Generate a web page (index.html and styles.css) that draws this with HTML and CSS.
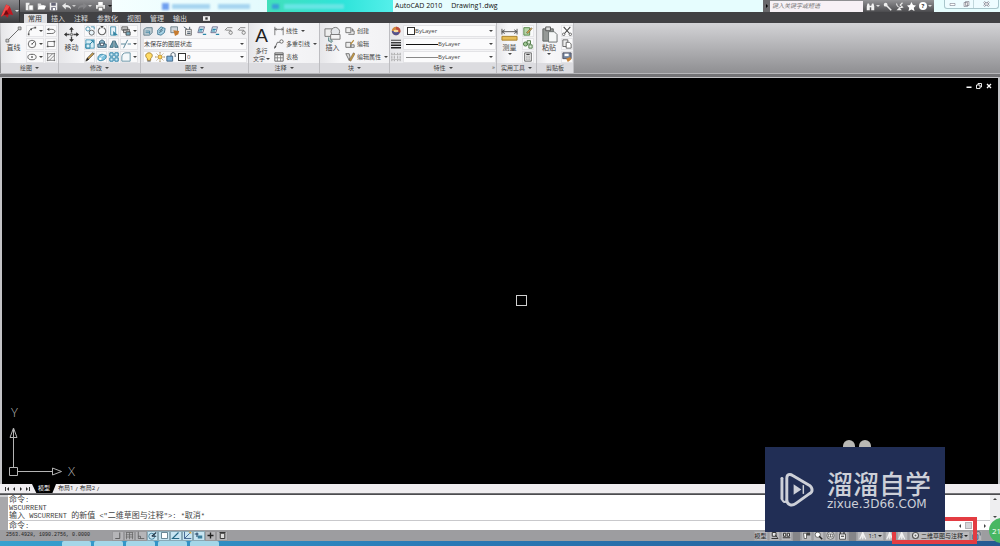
FILE: index.html
```html
<!DOCTYPE html>
<html lang="zh-CN">
<head>
<meta charset="utf-8">
<title>AutoCAD 2010 - Drawing1.dwg</title>
<link rel="stylesheet" href="styles.css">
</head>
<body>
<svg class="defs" aria-hidden="true">
  <symbol id="new" viewBox="0 0 12 12"><path d="M1 1h5v10H1z" fill="#eee"/><path d="M5 4h6v7H5z" fill="#fff" stroke="#777"/></symbol>
  <symbol id="open" viewBox="0 0 12 12"><path d="M1 10V2h4l1 2h4v2" fill="#ddd"/><path d="M1 10l2-5h9l-2 5z" fill="#fff"/></symbol>
  <symbol id="save" viewBox="0 0 12 12"><path d="M1 1h10v10H1z" fill="#eee"/><path d="M3 1h6v4H3zM3 7h6v4H3z" fill="#667"/><path d="M5 8h3v3H5z" fill="#fff"/></symbol>
  <symbol id="undo" viewBox="0 0 12 12"><path d="M0 5l5-4v3c5 0 7 2 7 6-2-3-4-3-7-3v3z" fill="#e8e8e8"/></symbol>
  <symbol id="redo" viewBox="0 0 12 12"><path d="M12 5L7 1v3C2 4 0 6 0 10c2-3 4-3 7-3v3z" fill="#858588"/></symbol>
  <symbol id="print" viewBox="0 0 12 12"><path d="M3 0h6v4H3z" fill="#fff"/><path d="M0 4h12v5H0z" fill="#e6e6e6"/><path d="M3 7h6v5H3z" fill="#fff" stroke="#555"/></symbol>
  <symbol id="line" viewBox="0 0 18 18"><path d="M2 16L16 2" stroke="#666" fill="none"/><path d="M1 14h3v3H1zM14 1h3v3h-3z" fill="#ccc" stroke="#666" stroke-width=".8"/></symbol>
  <symbol id="arc" viewBox="0 0 12 12"><path d="M2 10C2 5 4 3 10 2" stroke="#555" fill="none"/><path d="M1 9h2v2H1zM4 3h2v2H4zM9 1h2v2H9z" fill="#555"/></symbol>
  <symbol id="circle" viewBox="0 0 12 12"><circle cx="6" cy="6" r="4.5" stroke="#555" fill="none"/><path d="M6 6l3-3M5 6h2" stroke="#444"/></symbol>
  <symbol id="ellipse" viewBox="0 0 12 12"><ellipse cx="6" cy="6" rx="5" ry="3.3" stroke="#555" fill="none"/><path d="M5 6h2M6 5v2M6 2.500v1" stroke="#444"/></symbol>
  <symbol id="pline" viewBox="0 0 12 12"><path d="M1 9h6c5 0 5-5 0-5H4" stroke="#555" fill="none"/><path d="M4 2v4L1 4z" fill="#444"/></symbol>
  <symbol id="rect" viewBox="0 0 12 12"><path d="M2 3h8v6H2z" stroke="#666" fill="none"/><path d="M1 8h2v2H1zM9 2h2v2H9z" fill="#555"/></symbol>
  <symbol id="hatch" viewBox="0 0 12 12"><path d="M1 2h10M1 10h10M2 1v10M10 1v10M2 8l6-6M4 10l6-6" stroke="#666" fill="none" stroke-width=".9"/></symbol>
  <symbol id="move" viewBox="0 0 18 18"><path d="M9 3v4M9 11v4M3 9h4M11 9h4" stroke="#444" stroke-width="1.400"/><path d="M9 1l2.500 3h-5zM9 17l2.500-3h-5zM1 9l3-2.500v5zM17 9l-3-2.500v5z" fill="#333"/><path d="M8 8h2v2H8z" stroke="#777" fill="#ddd"/></symbol>
  <symbol id="copy2" viewBox="0 0 12 12"><circle cx="3.500" cy="3.500" r="2.500" stroke="#3686a5" fill="none"/><circle cx="8" cy="8" r="3" stroke="#555" fill="#e8f4fa"/><path d="M7 1h4v3" stroke="#3686a5" fill="none"/></symbol>
  <symbol id="rotate" viewBox="0 0 12 12"><path d="M4 2a4.500 4.500 0 1 0 4 0" stroke="#666" stroke-width="1.300" fill="none"/><path d="M4 0h4L6 3z" fill="#444"/></symbol>
  <symbol id="stretch" viewBox="0 0 12 12"><path d="M2 1h6v10H2z" stroke="#3686a5" fill="#e8f4fa"/><path d="M5 6l6 5H5z" fill="#3686a5"/></symbol>
  <symbol id="scale" viewBox="0 0 12 12"><path d="M1 1h10v10H1z" stroke="#3a93b5" fill="#d8eef6"/><path d="M1 6h5v5H1zM6 6l4-4M7 2h3v3" stroke="#2e86a8" fill="none" stroke-width="1.200"/></symbol>
  <symbol id="offset" viewBox="0 0 12 12"><path d="M1 10V6h2V3l3-2 3 2v3h2v4z" stroke="#2b5872" fill="#8eb9cc"/><path d="M4 8V5h4v3z" fill="#fff" stroke="#345"/></symbol>
  <symbol id="mirror" viewBox="0 0 12 12"><path d="M5 2v8H1zM7 2v8h4z" fill="#79aabd" stroke="#2d5b70"/></symbol>
  <symbol id="pencil" viewBox="0 0 12 12"><path d="M1 11l1-3 7-7 2 1-7 7z" fill="#d9ab52" stroke="#333" stroke-width=".8"/><path d="M1 11l2-4 2 2z" fill="#222"/></symbol>
  <symbol id="explode" viewBox="0 0 12 12"><path d="M1 8c0-4 3-6 7-5 4 0 4 4 1 6-3 2-8 2-8-1z" fill="#7fc2df" stroke="#25799c"/><circle cx="4" cy="8" r="1.500" fill="#fff"/><path d="M5 6l4-3" stroke="#fff"/></symbol>
  <symbol id="array" viewBox="0 0 12 12"><path d="M1 1h4v4H1zM7 1h4v4H7zM1 7h4v4H1zM7 7h4v4H7z" stroke="#267fa6" fill="#cdeaf6" stroke-width="1.200"/></symbol>
  <symbol id="order" viewBox="0 0 12 12"><path d="M1 1h7v4H1zM3 4h7v4H3z" fill="#ccc" stroke="#555"/><path d="M6 7h5v4H6z" fill="#7dafc2" stroke="#444"/></symbol>
  <symbol id="trim" viewBox="0 0 12 12"><path d="M0 6h5M8 6h4M3 11l5-10" stroke="#3d7187" fill="none"/></symbol>
  <symbol id="fillet" viewBox="0 0 12 12"><path d="M1 11V6c0-3 2-5 5-5h5v10z" stroke="#57879a" fill="#f4f8fa"/></symbol>
  <symbol id="layer" viewBox="0 0 12 12"><path d="M1 4l3-2h7v6l-3 3H1z" fill="#c2cfd5" stroke="#587583"/><path d="M3 6h5v4M3 8h5" stroke="#4285a3" fill="none"/></symbol>
  <symbol id="layer2" viewBox="0 0 12 12"><path d="M2 5l4-4 5 2-1 5-4 3-4-1z" fill="#a8d2e5" stroke="#3c7490"/><path d="M4 6l4-3M4 8l4-3" stroke="#33556a"/></symbol>
  <symbol id="layer3" viewBox="0 0 12 12"><path d="M1 1h8v7H1z" fill="#d0d7dc" stroke="#637780"/><path d="M4 5l7 1-1 4-4 2z" fill="#c67b2f"/></symbol>
  <symbol id="layer4" viewBox="0 0 12 12"><path d="M3 4h7v7H3z" fill="#eee" stroke="#666"/><path d="M1 1l4 3M8 1v3M5 7h4M5 9h4" stroke="#345"/></symbol>
  <symbol id="layer5" viewBox="0 0 12 12"><path d="M3 1h6l-2 7H1z" fill="#d8eaf2" stroke="#668"/><path d="M3 4h4M2 6h4M7 10h4" stroke="#2a88aa" stroke-width="1.400"/></symbol>
  <symbol id="layer6" viewBox="0 0 12 12"><path d="M1 5l3-3h6M2 5h6v5" stroke="#777" fill="none"/><circle cx="8" cy="8" r="2" stroke="#777" fill="#eee"/></symbol>
  <symbol id="bulb" viewBox="0 0 12 12"><path d="M4 8C0 4 3 1 6 1s6 3 2 7v2H4z" fill="#ffdc65" stroke="#9a7424"/><path d="M4 11h4" stroke="#555"/></symbol>
  <symbol id="sun" viewBox="0 0 12 12"><circle cx="6" cy="6" r="2.500" fill="#ffd65b" stroke="#ae7e22"/><path d="M6 0v2M6 10v2M0 6h2M10 6h2M2 2l1 1M9 9l1 1M2 10l1-1M9 3l1-1" stroke="#94702b"/></symbol>
  <symbol id="lock" viewBox="0 0 12 12"><path d="M1 5h7v6H1z" fill="#7eb2da" stroke="#315a7c"/><path d="M6 5V3c0-3 5-3 5 0v3" stroke="#345" fill="none"/></symbol>
  <symbol id="dim" viewBox="0 0 12 12"><path d="M1 1v10M11 1v10M1 4h10M3 3L1 4l2 1M9 3l2 1-2 1" stroke="#666" fill="none"/></symbol>
  <symbol id="leader" viewBox="0 0 12 12"><path d="M1 11l3-7h3" stroke="#555" fill="none"/><circle cx="9" cy="3" r="2" stroke="#555" fill="#fff"/><path d="M0 12l1-4 2 1z" fill="#444"/></symbol>
  <symbol id="table" viewBox="0 0 12 12"><path d="M1 1h10v10H1z" fill="#fff" stroke="#555"/><path d="M1 2h10v2H1z" fill="#666"/><path d="M1 7h10M4 4v7M8 4v7" stroke="#777"/></symbol>
  <symbol id="insert" viewBox="0 0 18 18"><path d="M1 3h9v8H1z" stroke="#777" fill="#eee"/><circle cx="12" cy="6" r="4.500" stroke="#777" fill="#e4e7ea"/><path d="M7 9h10v5H7z" stroke="#777" fill="#f4f4f4"/><path d="M5 12v4h3M7 14l2 2-2 2" stroke="#477" fill="none"/></symbol>
  <symbol id="create" viewBox="0 0 12 12"><path d="M1 2h6v6H1zM4 10h7V6H8" stroke="#666" fill="#eee"/><path d="M8 2l3 3-3 1z" fill="#777"/></symbol>
  <symbol id="edit" viewBox="0 0 12 12"><path d="M1 4h6v6H1zM7 7h4v3H7z" stroke="#666" fill="#eee"/><path d="M6 6l4-5 1 1-4 5z" fill="#b78b37"/></symbol>
  <symbol id="attr" viewBox="0 0 12 12"><path d="M1 2h4l1 4-1 4-4-8z" stroke="#666" fill="#ddd"/><path d="M5 10l5-9 2 1-5 9z" fill="#c49b43" stroke="#544" stroke-width=".5"/></symbol>
  <symbol id="wheel" viewBox="0 0 12 12"><circle cx="6" cy="6" r="5" fill="#d1873c"/><path d="M1 6a5 5 0 0 0 10 0z" fill="#54538f"/><path d="M6 1v5l5 2a5 5 0 0 0-5-7" fill="#bd4d3e"/><ellipse cx="6" cy="6" rx="3" ry="1.500" fill="#f6d99a"/></symbol>
  <symbol id="weights" viewBox="0 0 12 12"><path d="M0 1.500h12" stroke="#222"/><path d="M0 4.500h12" stroke="#222" stroke-width="1.500"/><path d="M0 7.500h12M0 10.500h12" stroke="#222" stroke-width="2"/></symbol>
  <symbol id="types" viewBox="0 0 12 12"><path d="M1 1v10M4 1v10M8 1v10M11 1v10" stroke="#999" stroke-dasharray="3 1"/><path d="M0 3h12M0 9h12" stroke="#bbb"/></symbol>
  <symbol id="measure" viewBox="0 0 18 18"><path d="M1 3v6M17 3v6M1 6h16M4 4L1 6l3 2M14 4l3 2-3 2" stroke="#555" fill="none"/><path d="M1 11h16v4H1z" fill="#e6bd58" stroke="#a98129"/></symbol>
  <symbol id="qselect" viewBox="0 0 12 12"><path d="M1 2h7v9H1z" fill="#b6d6a7" stroke="#477b3a"/><path d="M4 8l6-6 1 1-5 6z" fill="#d9a446" stroke="#554" stroke-width=".6"/></symbol>
  <symbol id="group" viewBox="0 0 12 12"><circle cx="3" cy="6" r="2.500" fill="#a0c995" stroke="#3d6b35"/><path d="M5 2h4v4H5zM7 7h4v4H7z" fill="#dbecd5" stroke="#3d6b35"/></symbol>
  <symbol id="calc" viewBox="0 0 12 12"><path d="M2 1h8v10H2z" fill="#eee" stroke="#555"/><path d="M4 3h4" stroke="#444" stroke-width="1.500"/><path d="M4 6h4M4 8.500h4" stroke="#555" stroke-dasharray="1 .6"/></symbol>
  <symbol id="paste" viewBox="0 0 18 18"><path d="M2 3h11v13H2z" fill="#959997" stroke="#5c605f"/><path d="M5 1h5v4H5z" fill="#ddd" stroke="#555"/><path d="M8 6h6l3 3v8H8z" fill="#f5f7f7" stroke="#69706e"/></symbol>
  <symbol id="cut" viewBox="0 0 12 12"><path d="M2 1l7 8M10 1L3 9" stroke="#444" stroke-width="1.300"/><circle cx="2" cy="10" r="1.500" stroke="#555" fill="none"/><circle cx="10" cy="10" r="1.500" stroke="#555" fill="none"/></symbol>
  <symbol id="copy" viewBox="0 0 12 12"><path d="M1 1h6v8H1z" stroke="#555" fill="#eee"/><path d="M5 4h4l2 2v5H5z" stroke="#555" fill="#fff"/></symbol>
  <symbol id="match" viewBox="0 0 12 12"><path d="M1 1h10v7H1z" fill="#72849e" stroke="#445"/><path d="M3 2h5v3H3z" fill="#fff"/><path d="M5 8l5-2 1 3-4 3z" fill="#c98538"/></symbol>
  <symbol id="bino" viewBox="0 0 12 12"><path d="M1 11V6l1-4h2l1 3h2l1-3h2l1 4v5H7V7H5v4z" fill="#f2f2f2"/></symbol>
  <symbol id="key" viewBox="0 0 12 12"><path d="M4 4l7 7" stroke="#eee" stroke-width="2"/><circle cx="3.500" cy="3.500" r="2.500" fill="#eee"/></symbol>
  <symbol id="dish" viewBox="0 0 12 12"><path d="M2 2c1 5 3 6 8 5L7 4l3-3" stroke="#eee" stroke-width="1.500" fill="none"/><path d="M2 11l4-4 3 4z" fill="#eee"/></symbol>
  <symbol id="star" viewBox="0 0 12 12"><path d="M6 0l2 4 4 .5-3 3 1 4.500-4-2-4 2 1-4.500-3-3L4 4z" fill="#fff"/></symbol>
  <symbol id="min" viewBox="0 0 12 12"><path d="M1 7h10v3H1z" fill="currentColor"/></symbol>
  <symbol id="restore" viewBox="0 0 12 12"><path d="M4 4V1h7v7H8M1 4h7v7H1z" fill="none" stroke="currentColor" stroke-width="1.800"/></symbol>
  <symbol id="close" viewBox="0 0 12 12"><path d="M2 2l8 8M10 2l-8 8" stroke="currentColor" stroke-width="2.600"/></symbol>
  <symbol id="snap" viewBox="0 0 12 12"><path d="M9 2v8H3" stroke="#444" fill="none"/></symbol>
  <symbol id="grid" viewBox="0 0 12 12"><path d="M1 2h10M1 5h10M1 8h10M2 2v9M6 2v9M10 2v9" stroke="#666" fill="none"/></symbol>
  <symbol id="ortho" viewBox="0 0 12 12"><path d="M3 1v9h8M3 7h3v3" stroke="#555" fill="none"/></symbol>
  <symbol id="polar" viewBox="0 0 12 12"><circle cx="5" cy="7" r="4" stroke="#246785" fill="none"/><path d="M5 7l6-5M5 7h6" stroke="#234" stroke-width="1.400"/></symbol>
  <symbol id="osnap" viewBox="0 0 12 12"><path d="M2 2h8v8H2z" stroke="#467" fill="#fff"/></symbol>
  <symbol id="otrack" viewBox="0 0 12 12"><path d="M10 2L2 10h9" stroke="#246785" fill="none" stroke-width="1.500"/></symbol>
  <symbol id="ducs" viewBox="0 0 12 12"><path d="M2 1v9h9M2 10l7-7" stroke="#247" fill="none"/><path d="M7 1h4v3z" fill="#d5a13b"/></symbol>
  <symbol id="dyn" viewBox="0 0 12 12"><path d="M1 4h5M4 2v6" stroke="#246" stroke-width="1.500"/><path d="M5 6h6v4H5z" fill="#3b7d9b"/></symbol>
  <symbol id="plus" viewBox="0 0 12 12"><path d="M6 2v8M2 6h8" stroke="#222" stroke-width="1.800"/></symbol>
  <symbol id="qp" viewBox="0 0 12 12"><path d="M3 3h6v7H3zM2 2h8" stroke="#333" fill="#ddd" stroke-width="1.300"/></symbol>
  <symbol id="layout1" viewBox="0 0 12 12"><path d="M2 10h9M3 2h5v5H3zM7 5l3 4" stroke="#333" fill="#eee" stroke-width="1.300"/></symbol>
  <symbol id="layout2" viewBox="0 0 12 12"><path d="M1 9h10M2 3h3v4H2zM7 3h3v4H7z" stroke="#333" fill="#eee" stroke-width="1.300"/></symbol>
  <symbol id="pan" viewBox="0 0 12 12"><path d="M2 3h4v7H3z" fill="#fff" stroke="#444"/><path d="M6 2h5v4H6z" fill="#444"/></symbol>
  <symbol id="zoom" viewBox="0 0 12 12"><circle cx="5" cy="5" r="3.500" fill="#fff" stroke="#444"/><path d="M7 7l4 4" stroke="#222" stroke-width="2"/></symbol>
  <symbol id="orbit" viewBox="0 0 12 12"><circle cx="6" cy="6" r="5" fill="#eee" stroke="#555"/><path d="M3 4h6v4H3zM6 4v4" stroke="#555" fill="none"/></symbol>
  <symbol id="motion" viewBox="0 0 12 12"><path d="M2 4h8v7H2z" fill="#eee" stroke="#333"/><path d="M3 1v3M8 1v3M4 7h4" stroke="#333" stroke-width="1.500"/></symbol>
  <symbol id="person" viewBox="0 0 12 12"><path d="M1 11l4-9 4 9M3 8h4M5 2v9" stroke="#f2f2f2" fill="none" stroke-width="1.500"/></symbol>
  <symbol id="scaleA" viewBox="0 0 12 12"><path d="M1 11l4-9 4 9M3 8h4M5 2v9" stroke="#f2f2f2" fill="none" stroke-width="1.500"/><path d="M8 1l4 6H8z" fill="#dcae36"/></symbol>
  <symbol id="gear" viewBox="0 0 12 12"><circle cx="6" cy="6" r="4" fill="#eee" stroke="#555" stroke-width="1.500"/><circle cx="6" cy="6" r="1.300" fill="#666"/></symbol>
</svg>

<div class="app">
  <header class="title">
    <div class="quick">
      <button aria-label="新建"><svg><use href="#new"/></svg></button>
      <button aria-label="打开"><svg><use href="#open"/></svg></button>
      <button aria-label="保存"><svg><use href="#save"/></svg></button>
      <button aria-label="放弃"><svg><use href="#undo"/></svg><i class="arr"></i></button>
      <button aria-label="重做"><svg><use href="#redo"/></svg><i class="arr"></i></button>
      <button aria-label="打印"><svg><use href="#print"/></svg></button>
      <button aria-label="自定义"><i class="arr dark"></i></button>
    </div>
    <div class="glass" aria-hidden="true"><i class="ghost g1"></i><i class="ghost g2"></i><i class="ghost g2"></i><i class="teal"><i class="ghost g3"></i><i class="ghost g4"></i></i></div>
    <h1 class="caption"><span>AutoCAD 2010</span><span>Drawing1.dwg</span></h1>
    <div class="info">
      <button class="fold" aria-label="折叠"><i class="arr right"></i></button>
      <input type="text" placeholder="键入关键字或短语" aria-label="搜索">
      <button aria-label="查找"><svg><use href="#bino"/></svg><i class="arr"></i></button>
      <button aria-label="速博中心"><svg><use href="#key"/></svg></button>
      <button aria-label="通讯中心"><svg><use href="#dish"/></svg></button>
      <button aria-label="收藏夹"><svg><use href="#star"/></svg></button>
      <button aria-label="帮助"><span class="help">?</span><i class="arr"></i></button>
    </div>
    <div class="win">
      <button aria-label="最小化"><svg viewBox="0 0 12 12"><path d="M1 5h10v4H1z" fill="#fff" stroke="#667"/></svg></button>
      <button aria-label="还原"><svg viewBox="0 0 12 12"><path d="M4 1h7v8H4zM1 3h7v8H1z" fill="#eee" stroke="#667"/></svg></button>
      <button class="x" aria-label="关闭"><svg viewBox="0 0 12 12"><path d="M1 2l10 8M11 2L1 10" stroke="#667" stroke-width="4"/><path d="M1 2l10 8M11 2L1 10" stroke="#fff" stroke-width="2"/></svg></button>
    </div>
    <button class="logo" aria-label="应用程序菜单"><svg viewBox="0 0 16 18"><path d="M1 15L7 1l4 2 4 10-5-1-1 4-4-3z" fill="#c3161f"/><path d="M7 1l4 2-5 8-5 4z" fill="#ee4a48"/><path d="M7 7l3 5-6 1z" fill="#6f0b12"/></svg><i class="arr"></i></button>
  </header>

  <nav class="tabs">
    <button class="on">常用</button><button>插入</button><button>注释</button><button>参数化</button><button>视图</button><button>管理</button><button>输出</button><button class="mini" aria-label="最小化功能区"><svg viewBox="0 0 12 8"><path d="M0 0h12v8H0z" fill="#eee"/><path d="M4 2h4v4H4z" fill="#333"/></svg></button>
  </nav>

  <main class="ribbon">
    <section class="panel p-draw">
      <div class="body">
        <button class="big"><svg><use href="#line"/></svg><span>直线</span></button>
        <div class="icons c2">
          <button class="drop" aria-label="圆弧"><svg><use href="#arc"/></svg><i class="arr"></i></button><button aria-label="多段线"><svg><use href="#pline"/></svg></button>
          <button class="drop" aria-label="圆"><svg><use href="#circle"/></svg><i class="arr"></i></button><button aria-label="矩形"><svg><use href="#rect"/></svg></button>
          <button class="drop" aria-label="椭圆"><svg><use href="#ellipse"/></svg><i class="arr"></i></button><button aria-label="图案填充"><svg><use href="#hatch"/></svg></button>
        </div>
      </div>
      <h2>绘图<i class="arr"></i></h2>
    </section>

    <section class="panel p-modify">
      <div class="body">
        <button class="big"><svg><use href="#move"/></svg><span>移动</span></button>
        <div class="icons c4">
          <button aria-label="复制"><svg><use href="#copy2"/></svg></button><button aria-label="旋转"><svg><use href="#rotate"/></svg></button><button aria-label="拉伸"><svg><use href="#stretch"/></svg></button><button class="drop" aria-label="绘图次序"><svg><use href="#order"/></svg><i class="arr"></i></button>
          <button aria-label="缩放"><svg><use href="#scale"/></svg></button><button aria-label="偏移"><svg><use href="#offset"/></svg></button><button aria-label="镜像"><svg><use href="#mirror"/></svg></button><button class="drop" aria-label="修剪"><svg><use href="#trim"/></svg><i class="arr"></i></button>
          <button aria-label="删除"><svg><use href="#pencil"/></svg></button><button aria-label="分解"><svg><use href="#explode"/></svg></button><button aria-label="阵列"><svg><use href="#array"/></svg></button><button class="drop" aria-label="圆角"><svg><use href="#fillet"/></svg><i class="arr"></i></button>
        </div>
      </div>
      <h2>修改<i class="arr"></i></h2>
    </section>

    <section class="panel p-layer">
      <div class="body rows">
        <div class="row spread">
          <button aria-label="图层特性"><svg><use href="#layer"/></svg></button><button aria-label="置为当前"><svg><use href="#layer2"/></svg></button><button aria-label="匹配"><svg><use href="#layer3"/></svg></button><button aria-label="上一个"><svg><use href="#layer4"/></svg></button><button aria-label="隔离"><svg><use href="#layer5"/></svg></button><button aria-label="冻结"><svg><use href="#layer5"/></svg></button><button aria-label="关闭图层"><svg><use href="#layer6"/></svg></button><button aria-label="解锁"><svg><use href="#layer6"/></svg></button>
        </div>
        <div class="row field"><select aria-label="图层状态"><option>未保存的图层状态</option></select><i class="arr"></i></div>
        <div class="row field"><svg><use href="#bulb"/></svg><svg><use href="#sun"/></svg><svg><use href="#lock"/></svg><i class="swatch"></i><select aria-label="图层"><option>0</option></select><i class="arr"></i></div>
      </div>
      <h2>图层<i class="arr"></i></h2>
    </section>

    <section class="panel p-note">
      <div class="body">
        <button class="big mtext"><b>A</b><span>多行<br>文字<i class="arr"></i></span></button>
        <div class="rows list">
          <button class="row"><svg><use href="#dim"/></svg>线性<i class="arr"></i></button>
          <button class="row"><svg><use href="#leader"/></svg>多重引线<i class="arr"></i></button>
          <button class="row"><svg><use href="#table"/></svg>表格</button>
        </div>
      </div>
      <h2>注释<i class="arr"></i></h2>
    </section>

    <section class="panel p-block">
      <div class="body">
        <button class="big"><svg><use href="#insert"/></svg><span>插入</span></button>
        <div class="rows list">
          <button class="row"><svg><use href="#create"/></svg>创建</button>
          <button class="row"><svg><use href="#edit"/></svg>编辑</button>
          <button class="row"><svg><use href="#attr"/></svg>编辑属性<i class="arr"></i></button>
        </div>
      </div>
      <h2>块<i class="arr"></i></h2>
    </section>

    <section class="panel p-props">
      <div class="body rows">
        <div class="row"><svg><use href="#wheel"/></svg><div class="field"><i class="swatch"></i><select aria-label="对象颜色"><option>ByLayer</option></select><i class="arr"></i></div></div>
        <div class="row"><svg><use href="#weights"/></svg><div class="field"><i class="rule thick"></i><select aria-label="线宽"><option>ByLayer</option></select><i class="arr"></i></div></div>
        <div class="row"><svg><use href="#types"/></svg><div class="field"><i class="rule"></i><select aria-label="线型"><option>ByLayer</option></select><i class="arr"></i></div></div>
      </div>
      <h2>特性<i class="arr"></i><span class="launch">»</span></h2>
    </section>

    <section class="panel p-util">
      <div class="body">
        <button class="big"><svg><use href="#measure"/></svg><span>测量</span><i class="arr"></i></button>
        <div class="icons"><button aria-label="快速选择"><svg><use href="#qselect"/></svg></button><button aria-label="点样式"><svg><use href="#group"/></svg></button><button aria-label="计算器"><svg><use href="#calc"/></svg></button></div>
      </div>
      <h2>实用工具<i class="arr"></i></h2>
    </section>

    <section class="panel p-clip">
      <div class="body">
        <button class="big"><svg><use href="#paste"/></svg><span>粘贴</span><i class="arr"></i></button>
        <div class="icons"><button aria-label="剪切"><svg><use href="#cut"/></svg></button><button aria-label="复制剪裁"><svg><use href="#copy"/></svg></button><button aria-label="特性匹配"><svg><use href="#match"/></svg></button></div>
      </div>
      <h2>剪贴板</h2>
    </section>
  </main>

  <section class="canvas" aria-label="绘图区">
    <div class="docwin"><button aria-label="最小化图形"><svg><use href="#min"/></svg></button><button aria-label="还原图形"><svg><use href="#restore"/></svg></button><button aria-label="关闭图形"><svg><use href="#close"/></svg></button></div>
    <i class="pick"></i>
    <svg class="ucs" viewBox="0 0 80 80"><g fill="none" stroke="#b4b4b4"><path d="M7.500 64.500h8v8h-8zM11.500 64V26M8 34.500L11.500 25l3.500 9.500zM16 68.500h34M50.500 65l9 3.500-9 3.500z"/></g><text x="9" y="14">Y</text><text x="66" y="73">X</text></svg>
  </section>

  <nav class="sheets">
    <button class="nav" aria-label="第一个"><i class="bar"></i><i class="arr left"></i></button><button class="nav" aria-label="上一个"><i class="arr left"></i></button><button class="nav" aria-label="下一个"><i class="arr right"></i></button><button class="nav" aria-label="最后"><i class="arr right"></i><i class="bar"></i></button>
    <button class="sheet on">模型</button><button class="sheet">布局1</button><i class="slash">/</i><button class="sheet">布局2</button><i class="slash">/</i>
  </nav>

  <section class="command">
    <div class="grip"></div>
    <div class="console">
      <p><span>命令</span>:</p>
      <p>WSCURRENT</p>
      <p><span>输入</span> WSCURRENT <span>的新值</span> &lt;"<span>二维草图与注释</span>"&gt;: *<span>取消</span>*</p>
      <div class="prompt"><label for="cmd"><span>命令</span>:</label><input id="cmd" type="text"><i class="arr left"></i><i class="thumb"></i><i class="arr right"></i></div>
    </div>
    <div class="vscroll"><i class="arr up"></i><i class="arr"></i></div>
  </section>

  <footer class="status">
    <output class="coords">2563.4928, 1090.2756, 0.0000</output>
    <div class="toggles">
      <button aria-label="捕捉"><svg><use href="#snap"/></svg></button><button aria-label="栅格"><svg><use href="#grid"/></svg></button><button aria-label="正交"><svg><use href="#ortho"/></svg></button><button class="on" aria-label="极轴"><svg><use href="#polar"/></svg></button><button class="on" aria-label="对象捕捉"><svg><use href="#osnap"/></svg></button><button class="on" aria-label="对象追踪"><svg><use href="#otrack"/></svg></button><button class="on" aria-label="DUCS"><svg><use href="#ducs"/></svg></button><button class="on" aria-label="DYN"><svg><use href="#dyn"/></svg></button><button aria-label="线宽显示"><svg><use href="#plus"/></svg></button><button aria-label="快捷特性"><svg><use href="#qp"/></svg></button>
    </div>
    <div class="right">
      <button>模型</button><button aria-label="快速查看布局"><svg><use href="#layout1"/></svg></button><button aria-label="快速查看图形"><svg><use href="#layout2"/></svg></button>
      <i class="sep"></i>
      <button aria-label="平移"><svg><use href="#pan"/></svg></button><button aria-label="缩放视图"><svg><use href="#zoom"/></svg></button><button aria-label="控制盘"><svg><use href="#orbit"/></svg></button><button aria-label="运动"><svg><use href="#motion"/></svg></button>
      <i class="sep"></i>
      <button class="scale"><svg><use href="#person"/></svg>1:1<i class="arr"></i></button><button aria-label="注释可见性"><svg><use href="#scaleA"/></svg></button><button aria-label="自动缩放"><svg><use href="#person"/></svg></button>
      <button class="workspace"><svg><use href="#gear"/></svg>二维草图与注释<i class="arr"></i></button><button aria-label="锁定"><svg><use href="#lock"/></svg></button>
    </div>
  </footer>
  <div class="taskbar"><i></i><i></i><i></i><i></i><i></i></div>

  <div class="highlight"></div>
  <div class="ears"><i></i><i></i></div>
  <div class="brand">
    <svg viewBox="0 0 36 36"><g fill="none" stroke="#cdd0d8" stroke-linecap="round" stroke-linejoin="round"><path d="M2 6v21" stroke-width="3"/><path d="M7 28V6c0-4 3-5 6-3l17 10c4 3 4 7 0 9L16 32c-4 3-9 1-9-4" stroke-width="3"/><path d="M7 27c0 5-4 4-5 0" stroke-width="2"/></g><path d="M14 12l8 5.500-8 5.500z" fill="#cdd0d8"/><path d="M24 13v9" stroke="#cdd0d8" stroke-width="1.500"/></svg>
    <div><strong>溜溜自学</strong><span>zixue.3D66.COM</span></div>
  </div>
  <div class="badge">21</div>
</div>
</body>
</html>
```
FILE: styles.css
```css
* { box-sizing: border-box; }
html, body { margin: 0; height: 100%; }
body { font: 6px/8px "Open Sans", "Noto Sans CJK SC", sans-serif; color: #444; overflow: hidden; }
button, input, select { font: inherit; color: inherit; border: 0; padding: 0; margin: 0; background: none; border-radius: 0; min-width: 0; }
button { display: flex; align-items: center; justify-content: center; white-space: nowrap; }
i { font-style: normal; display: block; }
svg { display: block; width: 10px; height: 10px; flex: none; }
h1, h2, p { margin: 0; font: inherit; }
.defs { position: absolute; width: 0; height: 0; }

.arr { width: 0; height: 0; flex: none; border: 2px solid transparent; border-top-color: currentColor; border-bottom: 0; }
.arr.right { border: 2px solid transparent; border-left-color: currentColor; border-right: 0; }
.arr.left { border: 2px solid transparent; border-right-color: currentColor; border-left: 0; }
.arr.up { border: 2px solid transparent; border-bottom-color: currentColor; border-top: 0; }
.arr.dark { color: #111; }

.app { position: relative; height: 100%; display: flex; flex-direction: column; background: #747477; overflow: hidden; }

.title { position: relative; flex: none; display: flex; height: 12px; background: #e6fdfe; }
.quick { width: 112px; padding-left: 25px; display: flex; align-items: center; gap: 4px; background: linear-gradient(#8c8c8f, #59595c); color: #ccc; }
.quick svg { width: 9px; height: 9px; }
.quick button { gap: 1px; }
.logo { position: absolute; left: 0; top: 0; width: 20px; height: 22px; z-index: 2; gap: 1px; background: linear-gradient(#8b8b8e, #3d3d40); border-right: 1px solid #303032; color: #ddd; }
.logo svg { width: 14px; height: 17px; }
.glass { width: 281px; display: flex; align-items: center; background: linear-gradient(90deg, #f5ffff, #d4f7fb); }
.ghost { height: 5px; background: #a7d5f0; filter: blur(1px); }
.g1 { width: 7px; height: 7px; margin-left: 50px; background: #6f9ff0; }
.g2 { width: 38px; margin-left: 3px; margin-right: 5px; }
.g2 + .g2 { width: 32px; }
.teal { flex: 1; height: 12px; margin-left: 12px; display: flex; align-items: center; gap: 5px; background: linear-gradient(90deg, #42dfba, #2ee4da 60%, #55efea); }
.g3 { width: 7px; margin-left: 5px; background: #389fd9; }
.g4 { width: 60px; background: #67e5e4; }
.caption { flex: 1; display: flex; gap: 9px; padding-left: 2px; font-size: 7px; line-height: 12px; color: #111; white-space: nowrap; }
.info { display: flex; align-items: center; gap: 3px; padding-right: 2px; background: linear-gradient(#929295, #4b4b4e); color: #ddd; }
.info svg { width: 9px; height: 9px; }
.info button { gap: 1px; }
.info input { width: 93px; height: 11px; margin-left: -3px; padding-left: 2px; background: #f7f1f6; font-style: italic; }
.info input::placeholder { color: #777; opacity: 1; }
.info .fold { width: 7px; height: 12px; color: #000; background: #68686b; }
.help { width: 8px; height: 8px; border-radius: 50%; background: #fff; color: #333; font-weight: 700; text-align: center; }
.win { display: flex; margin: 0 1px 3px 10px; border: 1px solid #a9c6cc; border-top: 0; border-radius: 0 0 3px 3px; background: #eefcff; }
.win button { width: 14px; }
.win .x { width: 25px; border-left: 1px solid #c1d8dc; }
.win svg { width: 7px; height: 6px; }

.tabs { flex: none; display: flex; height: 11px; padding: 2px 0 0 24px; background: #414144; font-size: 7px; line-height: 9px; color: #ddd; }
.tabs button { padding: 0 5px 0 4px; }
.tabs .on { background: #dedee1; color: #333; }
.tabs .mini { padding: 0; margin-left: 11px; }
.mini svg { width: 7px; height: 5px; }

.ribbon { flex: none; display: flex; height: 51px; padding-left: 1px; background: linear-gradient(#d3d3d6, #8f8f92); border-bottom: 1px solid #b6b6b9; }
.panel { flex: none; display: flex; flex-direction: column; border-right: 1px solid #bdbdc1; background: linear-gradient(90deg, #e6e6e9, #f7f7f9 30%, #f2f2f4); }
.panel h2 { flex: none; display: flex; align-items: center; justify-content: center; gap: 3px; height: 10px; background: #dcdce0; position: relative; }
.body { flex: 1; display: flex; padding-top: 2px; }
.p-draw { width: 58px; }
.p-modify { width: 82px; }
.p-layer { width: 108px; }
.p-note { width: 71px; }
.p-block { width: 70px; }
.p-props { width: 107px; }
.p-util { width: 40px; }
.p-clip { width: 37px; }
.launch { position: absolute; right: 1px; top: 0; }
.big { flex-direction: column; justify-content: flex-start; width: 25px; font-size: 7px; line-height: 10px; padding-top: 1px; }
.big svg { width: 17px; height: 17px; }
.icons { display: grid; grid-auto-rows: 12px; grid-auto-columns: 12px; gap: 1px; align-content: start; }
.icons button { background: #fafafb; border: 1px solid #e5e5e8; }
.icons .drop { gap: 2px; }
.c2 { grid-template-columns: 18px 12px; }
.c4 { grid-template-columns: 11px 11px 11px 18px; }
.rows { flex-direction: column; display: flex; gap: 1px; }
.row { display: flex; align-items: center; height: 12px; }
.p-layer .rows { padding: 2px 1px 0 2px; }
.p-props .rows { padding: 2px 0 0 1px; }
.spread { justify-content: space-between; }
.field { display: flex; flex: 1; align-items: center; height: 12px; padding: 0 2px; background: #fbfbfc; border: 1px solid #e3e3e6; }
.rows > .field { flex: none; gap: 1px; padding-left: 0; }
.field select { appearance: none; flex: 1; height: 10px; line-height: 10px; }
.field svg { width: 10px; height: 10px; }
.swatch { width: 8px; height: 8px; flex: none; margin-left: 1px; border: 1px solid #333; background: #fff; }
.p-props .row { gap: 2px; }
.rule { width: 32px; height: 1px; background: #888; }
.rule.thick { background: #111; }
.list { flex: 1; align-items: flex-start; }
.list .row { gap: 2px; }
.list .arr, .mtext .arr { margin-left: 1px; }
.mtext { font-size: 6px; line-height: 8px; padding-top: 0; }
.mtext b { font: 19px/22px "Liberation Sans", sans-serif; color: #222; }
.mtext .arr { display: inline-block; vertical-align: middle; }

.canvas { position: relative; flex: 1; min-height: 0; margin-top: 3px; background: #000; border: 1px solid #c3c3c6; border-width: 1px 2px 0; }
.docwin { display: flex; justify-content: flex-end; gap: 4px; padding: 5px 6px 0; color: #fff; }
.docwin svg { width: 6px; height: 6px; }
.pick { position: absolute; left: 51.6%; top: 53.400%; width: 11px; height: 11px; border: 1px solid #d0d0d0; }
.ucs { position: absolute; left: 0; bottom: 1px; width: 80px; height: 80px; }
.ucs text { font: 13px "Open Sans", sans-serif; font-weight: 300; fill: #b4b4b4; }

.sheets { flex: none; display: flex; align-items: center; height: 9px; padding-left: 3px; background: #efedf0; color: #222; }
.nav { width: 7px; gap: 1px; }
.bar { width: 1px; height: 4px; background: #333; }
.sheet { font-size: 6px; line-height: 9px; padding: 0 2px; }
.sheet.on { margin-left: 1px; padding: 0 6px; background: #000; color: #fff; clip-path: polygon(0 0, 100% 0, 85% 100%, 18% 100%); }

.command { flex: none; display: flex; margin-top: 1px; border-top: 1px solid #4c4c4f; background: #fff; }
.grip { width: 8px; background: #a8a8ab; border-top: 2px solid #d0d0d3; }
.console { flex: 1; font: 7px/8px "Liberation Mono", "Noto Sans CJK SC", monospace; color: #444; padding-top: 1px; }
.console p { padding-left: 1px; white-space: pre; height: 8px; }
.console span { font-size: 8px; }
.prompt { display: flex; align-items: center; height: 10px; border-top: 1px solid #c9c9cc; padding: 0 4px 0 1px; gap: 4px; }
.prompt input { flex: 1; height: 8px; }
.thumb { width: 7px; height: 7px; background: #d5d5d8; border: 1px solid #b3b3b6; }
.prompt .right { margin-left: 8px; }
.vscroll { width: 10px; display: flex; flex-direction: column; align-items: center; justify-content: space-between; padding: 3px 0 12px; background: #eeeef0; }

.status { flex: none; display: flex; align-items: center; height: 11px; background: #9d9da0; color: #222; }
.coords { width: 112px; padding-left: 6px; font: 5px/11px "Liberation Mono", monospace; white-space: nowrap; }
.toggles { display: flex; width: 116px; }
.toggles button { flex: 1; height: 10px; background: #b5b5b8; border: 1px solid #98989b; }
.toggles .on { background: #c8e5f2; border-color: #8aa9b6; }
.status svg { width: 9px; height: 9px; }
.right { display: flex; }
.status .right { margin-left: auto; padding-right: 18px; gap: 1px; }
.right button { height: 10px; min-width: 11px; background: #bababd; border: 1px solid #a4a4a7; }
.sep { width: 7px; background: #858588; }
.right .scale { gap: 1px; padding: 0 1px; }
.right .workspace { gap: 1px; padding: 0 1px; }
.taskbar { flex: none; height: 5px; display: flex; gap: 3px; padding-left: 62px; background: linear-gradient(90deg, #37a1cf, #2a79b6 45%, #255a92); }
.taskbar i { width: 29px; border-radius: 2px 2px 0 0; background: #a5d6e8; }

.highlight { position: absolute; right: 23px; bottom: 2px; width: 85px; height: 27px; border: 4px solid #e33c42; }
.ears { position: absolute; right: 129px; bottom: 97px; display: flex; gap: 4px; }
.ears i { width: 12px; height: 9px; border-radius: 6px 6px 0 0; background: #b9b8b4; }
.brand { position: absolute; right: 55px; bottom: 14px; width: 180px; height: 85px; display: flex; align-items: center; gap: 12px; padding-left: 15px; background: #212e55; color: #cdd0d8; }
.brand svg { width: 35px; height: 36px; }
.brand strong, .brand span { display: block; }
.brand strong { font: 500 26px/28px "Noto Sans CJK SC", sans-serif; }
.brand span { font: 12px/14px "DejaVu Sans", sans-serif; }
.badge { position: absolute; right: -14px; bottom: 3px; width: 25px; height: 25px; padding-left: 3px; border-radius: 50%; background: #48b763; color: #fff; font-size: 8px; line-height: 25px; }
```
